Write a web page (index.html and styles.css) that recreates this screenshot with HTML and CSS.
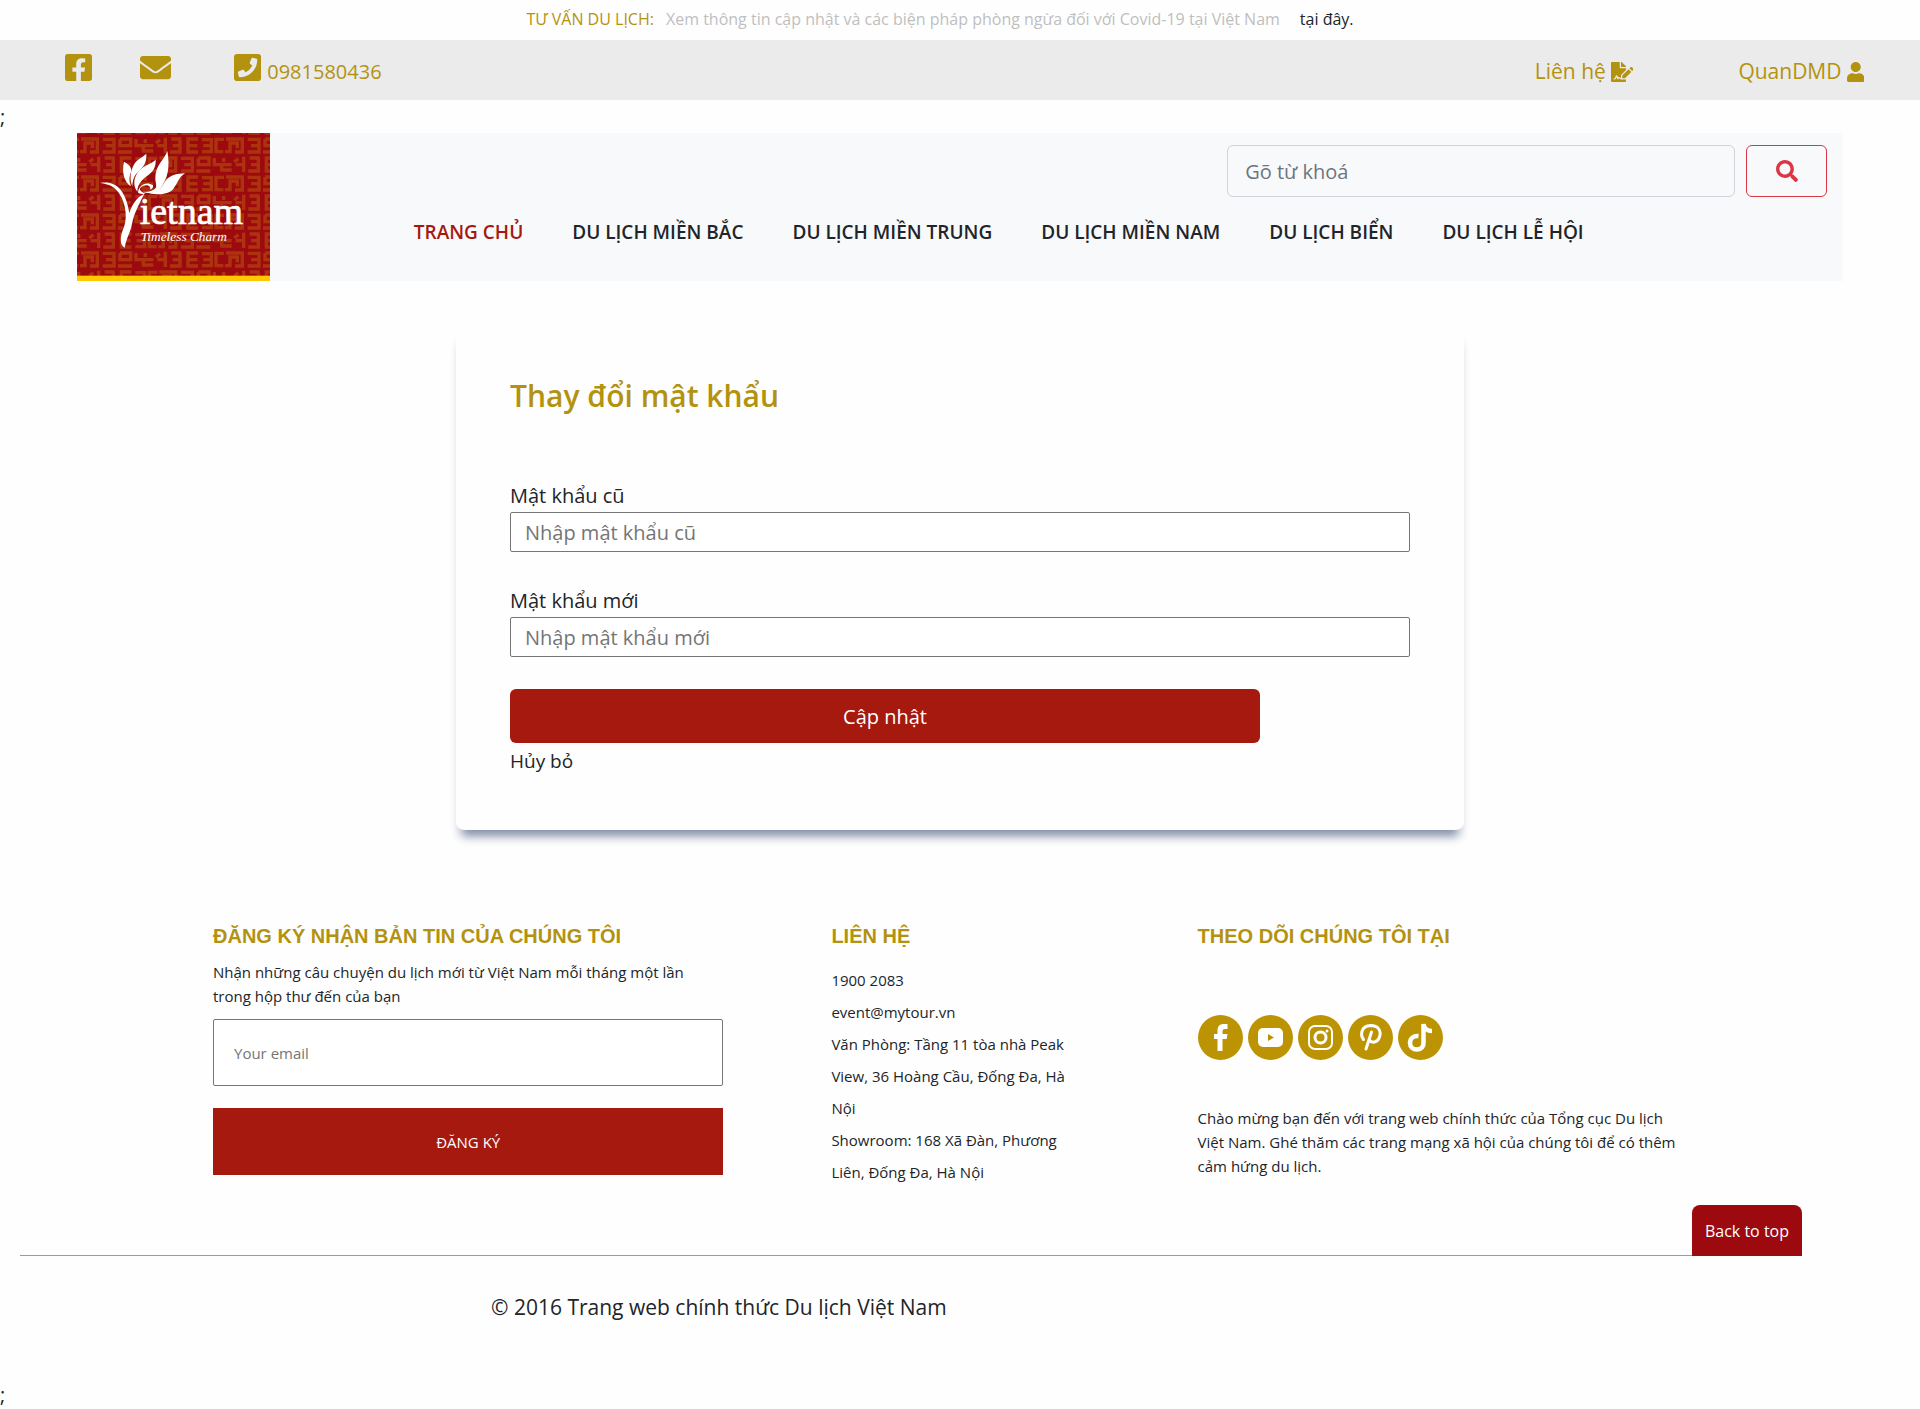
FILE: index.html
```html
<!DOCTYPE html>
<html lang="vi">
<head>
<meta charset="utf-8">
<meta name="viewport" content="width=device-width, initial-scale=1">
<title>Thay đổi mật khẩu</title>
<link rel="stylesheet" href="styles.css">
</head>
<body id="top">
<div class="notice">
  <strong class="notice-title">TƯ VẤN DU LỊCH:</strong>
  <span class="notice-text">Xem thông tin cập nhật và các biện pháp phòng ngừa đối với Covid-19 tại Việt Nam</span>
  <a class="notice-link" href="#">tại đây.</a>
</div>

<div class="topbar">
  <a class="top-facebook" href="#" aria-label="Facebook"><svg class="icon-lg" viewBox="0 0 448 512"><path d="M400 32H48A48 48 0 0 0 0 80v352a48 48 0 0 0 48 48h137.25V327.69h-63V256h63v-54.64c0-62.15 37-96.48 93.67-96.48 27.14 0 55.52 4.84 55.52 4.84v61h-31.27c-30.81 0-40.42 19.12-40.42 38.73V256h68.78l-11 71.69h-57.78V480H400a48 48 0 0 0 48-48V80a48 48 0 0 0-48-48z"/></svg></a>
  <a class="top-mail" href="#" aria-label="Email"><svg class="icon-lg" viewBox="0 0 512 512"><path d="M502.3 190.8c3.9-3.1 9.7-.2 9.7 4.7V400c0 26.5-21.5 48-48 48H48c-26.5 0-48-21.5-48-48V195.6c0-5 5.7-7.8 9.7-4.7 22.4 17.4 52.1 39.5 154.1 113.6 21.1 15.4 56.7 47.8 92.2 47.6 35.7.3 72-32.8 92.3-47.6 102-74.1 131.6-96.3 154-113.7zM256 320c23.2.4 56.6-29.2 73.4-41.4 132.7-96.3 142.8-104.7 173.4-128.7 5.8-4.5 9.2-11.5 9.2-18.9v-19c0-26.5-21.5-48-48-48H48c-26.5 0-48 21.5-48 48v19c0 7.4 3.4 14.3 9.2 18.9 30.6 23.9 40.7 32.4 173.4 128.7 16.8 12.2 50.2 41.8 73.4 41.4z"/></svg></a>
  <a class="top-phone" href="#"><svg class="icon-lg" viewBox="0 0 448 512"><path d="M400 32H48C21.49 32 0 53.49 0 80v352c0 26.51 21.49 48 48 48h352c26.51 0 48-21.49 48-48V80c0-26.51-21.49-48-48-48zM94 416c-7.033 0-13.057-4.873-14.616-11.627l-14.998-65a15 15 0 0 1 8.707-17.16l69.998-29.999a15 15 0 0 1 17.518 4.289l30.997 37.885c48.944-22.963 88.297-62.858 110.781-110.78l-37.886-30.997a15.001 15.001 0 0 1-4.289-17.518l30-69.998a15 15 0 0 1 17.16-8.707l65 14.998A14.997 14.997 0 0 1 384 126c0 160.292-129.945 290-290 290z"/></svg><span>0981580436</span></a>
  <div class="top-right">
    <a class="top-link" href="#"><span>Liên hệ</span><svg class="icon-sm" viewBox="0 0 576 512"><path d="M218.17 424.14c-2.95-5.92-8.09-6.52-10.17-6.52s-7.22.59-10.02 6.19l-7.67 15.34c-6.37 12.78-25.03 11.37-29.48-2.09L144 386.59l-10.61 31.88c-5.89 17.66-22.38 29.53-41 29.53H80c-8.84 0-16-7.16-16-16s7.16-16 16-16h12.39c4.83 0 9.11-3.08 10.64-7.66l18.19-54.64c3.3-9.81 12.44-16.41 22.78-16.41s19.48 6.59 22.77 16.41l13.88 41.64c19.75-16.19 54.06-9.7 66 14.16 1.89 3.78 5.49 5.95 9.36 6.26v-82.12l128-127.09V160H248c-13.2 0-24-10.8-24-24V0H24C10.7 0 0 10.7 0 24v464c0 13.3 10.7 24 24 24h336c13.3 0 24-10.7 24-24v-40l-128-.11c-16.12-.31-30.58-9.28-37.83-23.75zM384 121.9c0-6.3-2.5-12.4-7-16.9L279.1 7c-4.5-4.5-10.6-7-17-7H256v128h128v-6.1zm-96 225.06V416h68.99l161.68-162.78-67.88-67.88L288 346.96zm280.54-179.63l-31.87-31.87c-9.94-9.94-26.07-9.94-36.01 0l-27.25 27.25 67.88 67.88 27.25-27.25c9.95-9.94 9.95-26.07 0-36.01z"/></svg></a>
    <a class="top-link" href="#"><span>QuanDMD</span><svg class="icon-sm" viewBox="0 0 448 512"><path d="M224 256c70.7 0 128-57.3 128-128S294.7 0 224 0 96 57.3 96 128s57.3 128 128 128zm89.6 32h-16.7c-22.2 10.2-46.9 16-72.9 16s-50.6-5.8-72.9-16h-16.7C60.2 288 0 348.2 0 422.4V464c0 26.5 21.5 48 48 48h352c26.5 0 48-21.5 48-48v-41.6c0-74.2-60.2-134.4-134.4-134.4z"/></svg></a>
  </div>
</div>
<div class="stray">;</div>

<header class="header">
  <a class="logo" href="#" aria-label="Vietnam Timeless Charm">
    <svg viewBox="231 400 579 444">
      <defs>
        <pattern id="meander" x="240" y="406" width="435" height="114" patternUnits="userSpaceOnUse">
          <g id="meander-row" fill="none" stroke="#ad330f" stroke-width="10">
            <path d="M0 50H15V24H37V40M3 12H52V51H30M68 13H102V51H68M78 32H102M120 12H152V32H120V12M114 51H156M168 12V32H190V51M168 32H220M196 12V24M186 48H220M256 8V54M232 32H256M240 14L228 24M274 12H304M278 32H304M300 12V51H270M354 12H324V51H354M324 32H352M366 14H394V50H366M370 32H394M432 13H408V50H430"/>
          </g>
          <use href="#meander-row" x="-200" y="57"/>
          <use href="#meander-row" x="235" y="57"/>
        </pattern>
      </defs>
      <rect x="231" y="400" width="579" height="429" fill="#9c0a0f"/>
      <rect x="231" y="400" width="579" height="429" fill="url(#meander)"/>
      <rect x="231" y="828" width="579" height="16" fill="#ffc800"/>
      <g fill="#fff">
        <path d="M300 550C345 543 376 566 388 640C396 616 408 594 433 582C422 604 402 640 396 672C390 702 380 712 374 744C360 738 358 712 372 682C384 650 376 596 346 568C334 556 318 552 300 550Z"/>
        <path d="M372 486C398 500 396 512 390 526C386 540 390 552 393 560C374 548 364 520 372 486Z"/>
        <path d="M439 462C440 488 432 500 416 515C402 528 398 542 397 560C386 532 394 500 410 484C420 474 432 470 439 462Z"/>
        <path d="M467 480C468 506 458 516 440 530C424 542 412 556 412 576C398 558 400 530 420 510C438 494 456 492 467 480Z"/>
        <path d="M502 454C510 502 506 532 478 572C466 580 446 584 428 576C448 578 458 574 466 566C472 560 466 550 466 534C466 496 494 480 502 454Z"/>
        <path d="M555 521C534 534 534 552 518 570C498 588 456 586 440 578C474 580 482 568 492 550C506 526 530 522 555 521Z"/>
        <path d="M414 578C416 556 438 544 458 556C462 562 456 568 450 570C456 556 432 550 420 566C418 572 426 578 436 582C424 584 416 582 414 578Z"/>
      </g>
      <text class="logo-name" x="419" y="672">ietnam</text>
      <text class="logo-tag" x="422" y="724">Timeless Charm</text>
    </svg>
  </a>
  <div class="header-main">
    <form class="search" role="search">
      <input class="search-input" type="search" placeholder="Gõ từ khoá" aria-label="Gõ từ khoá">
      <button class="search-button" type="button" aria-label="Tìm kiếm"><svg viewBox="0 0 512 512"><path d="M505 442.7L405.3 343c-4.5-4.5-10.6-7-17-7H372c27.6-35.3 44-79.7 44-128C416 93.1 322.9 0 208 0S0 93.1 0 208s93.1 208 208 208c48.3 0 92.7-16.4 128-44v16.3c0 6.4 2.5 12.5 7 17l99.7 99.7c9.4 9.4 24.6 9.4 33.9 0l28.3-28.3c9.4-9.4 9.4-24.6.1-34zM208 336c-70.7 0-128-57.2-128-128 0-70.7 57.2-128 128-128 70.7 0 128 57.2 128 128 0 70.7-57.2 128-128 128z"/></svg></button>
    </form>
    <nav class="nav">
      <a class="nav-link active" href="#">TRANG CHỦ</a>
      <a class="nav-link" href="#">DU LỊCH MIỀN BẮC</a>
      <a class="nav-link" href="#">DU LỊCH MIỀN TRUNG</a>
      <a class="nav-link" href="#">DU LỊCH MIỀN NAM</a>
      <a class="nav-link" href="#">DU LỊCH BIỂN</a>
      <a class="nav-link" href="#">DU LỊCH LỄ HỘI</a>
    </nav>
  </div>
</header>

<main>
  <form class="card">
    <h1 class="card-title">Thay đổi mật khẩu</h1>
    <div class="field">
      <label for="old-password">Mật khẩu cũ</label>
      <input id="old-password" type="password" placeholder="Nhập mật khẩu cũ">
    </div>
    <div class="field">
      <label for="new-password">Mật khẩu mới</label>
      <input id="new-password" type="password" placeholder="Nhập mật khẩu mới">
    </div>
    <button class="submit" type="button">Cập nhật</button>
    <a class="cancel" href="#">Hủy bỏ</a>
  </form>
</main>

<footer>
  <div class="footer-columns">
    <form class="newsletter">
      <h2 class="footer-title">ĐĂNG KÝ NHẬN BẢN TIN CỦA CHÚNG TÔI</h2>
      <p class="footer-text">Nhận những câu chuyện du lịch mới từ Việt Nam mỗi tháng một lần trong hộp thư đến của bạn</p>
      <input class="email" type="email" placeholder="Your email" aria-label="Your email">
      <button class="register" type="button">ĐĂNG KÝ</button>
    </form>
    <section>
      <h2 class="footer-title">LIÊN HỆ</h2>
      <ul class="contact">
        <li>1900 2083</li>
        <li>event@mytour.vn</li>
        <li>Văn Phòng: Tầng 11 tòa nhà Peak View, 36 Hoàng Cầu, Đống Đa, Hà Nội</li>
        <li>Showroom: 168 Xã Đàn, Phương Liên, Đống Đa, Hà Nội</li>
      </ul>
    </section>
    <section class="follow">
      <h2 class="footer-title">THEO DÕI CHÚNG TÔI TẠI</h2>
      <div class="social">
        <a href="#" aria-label="Facebook"><svg viewBox="0 0 45 45"><circle cx="22.500" cy="22.500" r="22.500" fill="#bc9302"/><path fill="#fff" d="M19.500 36V24H16v-5h3.500v-3.500c0-4.500 2.500-6.500 6-6.500h4v5h-2.500c-1.800 0-2.500.8-2.500 2.500V19h5l-.8 5h-4.200v12z"/></svg></a>
        <a href="#" aria-label="YouTube"><svg viewBox="0 0 45 45"><circle cx="22.500" cy="22.500" r="22.500" fill="#bc9302"/><rect x="10" y="13" width="25" height="19" rx="5" fill="#fff"/><path fill="#bc9302" d="M20 19v7l6-3.500z"/></svg></a>
        <a href="#" aria-label="Instagram"><svg viewBox="0 0 45 45"><circle cx="22.500" cy="22.500" r="22.500" fill="#bc9302"/><g fill="none" stroke="#fff" stroke-width="2"><rect x="11" y="11" width="23" height="23" rx="6"/><circle cx="22.500" cy="22.500" r="5.500" stroke-width="3"/></g><circle cx="29" cy="16" r="1.500" fill="#fff"/></svg></a>
        <a href="#" aria-label="Pinterest"><svg viewBox="0 0 45 45"><circle cx="22.500" cy="22.500" r="22.500" fill="#bc9302"/><path fill="none" stroke="#fff" stroke-width="3" stroke-linecap="round" d="M15.500 24.500C12 20 13 11 22.500 10.500c8 0 11 5.500 9 11.500-2 6-8 6.500-10 3M23.500 17L18 34"/></svg></a>
        <a href="#" aria-label="TikTok"><svg viewBox="0 0 45 45"><circle cx="22.500" cy="22.500" r="22.500" fill="#bc9302"/><path fill="none" stroke="#fff" stroke-width="4.500" d="M20.500 21c-5-.5-8.500 2.500-8.500 7 0 8.500 13.500 9 13.500 0V9c.5 4.500 4 7 8.500 7"/></svg></a>
      </div>
      <p class="footer-text">Chào mừng bạn đến với trang web chính thức của Tổng cục Du lịch Việt Nam. Ghé thăm các trang mạng xã hội của chúng tôi để có thêm cảm hứng du lịch.</p>
    </section>
  </div>
  <div class="divider"><a class="back-to-top" href="#top">Back to top</a></div>
  <p class="copyright">© 2016 Trang web chính thức Du lịch Việt Nam</p>
</footer>
<div class="stray">;</div>
</body>
</html>
```

FILE: styles.css
```css
* { box-sizing: border-box; }

body {
  margin: 0;
  background: #fefefe;
  color: #212529;
  font-family: "Open Sans", "Noto Sans", sans-serif;
  font-size: 20px;
  line-height: 33px;
}

a { color: inherit; text-decoration: none; }
h1, h2, p, ul { margin: 0; padding: 0; }
ul { list-style: none; }
input, button { font: inherit; }
svg { display: block; fill: currentColor; }

.notice {
  display: flex;
  justify-content: center;
  height: 40px;
  padding-right: 40px;
  font-size: 16px;
  line-height: 38px;
}
.notice-title { margin-right: 12px; color: #b3920f; font-weight: 500; }
.notice-text { margin-right: 20px; color: #bfbfbf; }

.topbar {
  display: flex;
  align-items: flex-start;
  height: 60px;
  padding: 12px 56px 0 65px;
  background: #ebebeb;
  color: #b3920f;
}
.icon-lg { height: 31px; }
.icon-sm { height: 20px; }
.top-mail { margin-left: 48px; }
.top-phone { display: flex; gap: 6px; margin-left: 63px; }
.top-phone span { padding-top: 3px; }
.top-right { display: flex; gap: 105px; margin-left: auto; padding-top: 3px; font-size: 21px; }
.top-link { display: flex; align-items: center; gap: 5px; }

.stray { height: 33px; }

.header {
  display: flex;
  width: 92%;
  margin: 0 auto;
  background: #f8f9fb;
}
.logo { flex: none; width: 193px; }
.logo-name { fill: #fff; stroke: #fff; stroke-width: 2px; font-family: "Liberation Serif", serif; font-size: 114px; }
.logo-tag { fill: #fff; font-family: "Liberation Serif", serif; font-size: 40px; font-style: italic; }
.header-main { flex: 1; padding: 12px 16px 0 144px; }

.search { display: flex; justify-content: flex-end; gap: 11px; }
.search-input {
  width: 508px;
  height: 52px;
  padding: 0 17px;
  border: 1px solid #ced4da;
  border-radius: 6px;
  background: transparent;
}
.search-input::placeholder { color: #6c757d; opacity: 1; }
.search-button {
  display: grid;
  place-items: center;
  width: 81px;
  height: 52px;
  border: 1px solid #dc3545;
  border-radius: 6px;
  background: transparent;
  color: #dc3545;
}
.search-button svg { height: 22px; }

.nav { display: flex; gap: 49px; margin-top: 19px; font-size: 19px; font-weight: 600; }
.nav-link { white-space: nowrap; }
.nav-link.active { color: #a6190f; }

.card {
  display: flex;
  flex-direction: column;
  align-items: flex-start;
  max-width: 1008px;
  margin: 49px auto 0;
  padding: 46px 54px 57px;
  border-radius: 8px;
  background: #fefefe;
  box-shadow: 0 12px 10px -6px rgba(20, 45, 90, 0.5), 0 8px 10px rgba(20, 45, 90, 0.05);
}
.card-title { margin-bottom: 63px; color: #b3920f; font-size: 30px; font-weight: 600; line-height: 40px; }
.field { width: 100%; margin-bottom: 32px; }
.field label { display: block; }
.field input {
  display: block;
  width: 100%;
  height: 40px;
  padding: 0 14px;
  border: 1px solid #767676;
  border-radius: 2px;
  background: #fff;
}
.field input::placeholder { color: #757575; }
.submit {
  width: 750px;
  max-width: 100%;
  height: 54px;
  border: 0;
  border-radius: 6px;
  background: #a5190e;
  color: #fff;
}
.cancel { margin-top: 6px; font-size: 19px; line-height: 24px; }

.footer-columns {
  display: grid;
  grid-template-columns: 510fr 258fr 510fr;
  gap: 108px;
  margin-top: 94px;
  padding: 0 212px 0 213px;
  font-size: 15px;
  line-height: 24px;
}
.footer-title { margin-bottom: 12px; color: #b3920f; font-family: "Liberation Sans", Arial, sans-serif; font-size: 20px; font-weight: 700; line-height: 24px; }
.newsletter { display: flex; flex-direction: column; }
.email {
  height: 67px;
  margin: 11px 0 22px;
  padding: 0 20px;
  border: 1px solid #767676;
  border-radius: 2px;
  background: #fff;
}
.email::placeholder { color: #757575; }
.register { height: 67px; border: 0; background: #a5190e; color: #fff; }
.contact { padding-top: 4px; line-height: 32px; }
.follow .footer-text { padding-right: 20px; }
.social { display: flex; gap: 5px; margin: 67px 0 46px; }
.social svg { width: 45px; height: 45px; }

.divider {
  display: flex;
  justify-content: flex-end;
  margin: 17px 118px 0 20px;
  border-bottom: 1px solid #d08488;
}
.back-to-top {
  margin-bottom: -1px;
  padding: 10px 13px 8px;
  border-radius: 8px 8px 0 0;
  background: #9c0a0f;
  color: #fff;
  font-size: 16px;
}
.copyright { margin: 35px 0 54px; padding-left: 491px; font-size: 21px; }
```
